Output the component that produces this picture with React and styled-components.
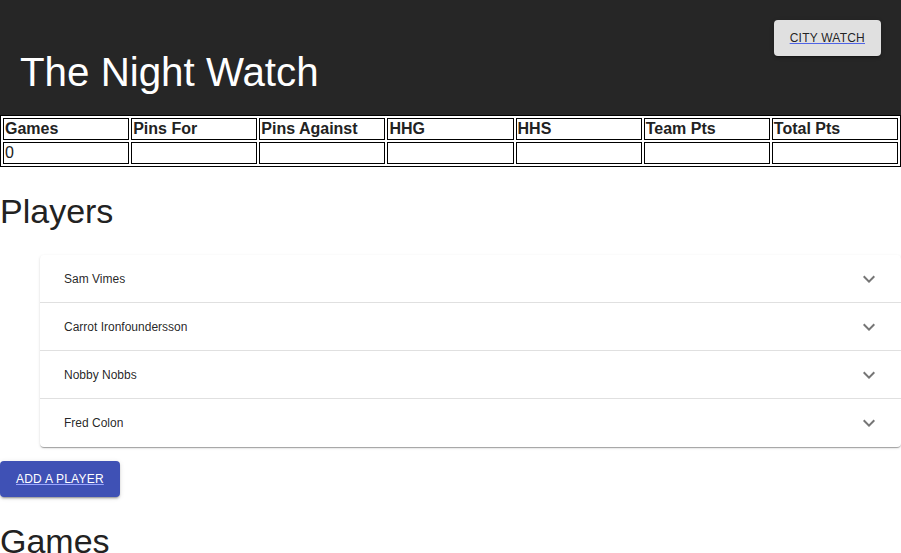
import React from "react";
import styled, { createGlobalStyle } from "styled-components";

const Global = createGlobalStyle`
  html, body { margin: 0; padding: 0; background: #fff; }
  body {
    font-family: "Liberation Sans", Arial, sans-serif;
    color: rgba(0,0,0,0.87);
    overflow: hidden;
  }
`;

const Header = styled.header`
  background: #262626;
  height: 115px;
  box-sizing: border-box;
  padding: 20px 20px 0 20px;
  display: flex;
  justify-content: space-between;
  align-items: flex-start;
`;

const Title = styled.h1`
  margin: 0;
  align-self: flex-end;
  margin-bottom: 19px;
  font-size: 40.3px;
  font-weight: 400;
  line-height: 46px;
  color: #fff;
`;

const LinkButton = styled.a`
  display: inline-flex;
  align-items: center;
  height: 36px;
  box-sizing: border-box;
  padding: 6px 16px;
  border-radius: 4px;
  font-size: 12px;
  letter-spacing: 0.22px;
  line-height: 24px;
  text-transform: uppercase;
  text-decoration: underline;
  text-decoration-color: ${(p) => (p.$primary ? "#9aa6ff" : "#4f63e6")};
  color: ${(p) => (p.$primary ? "#fff" : "rgba(0,0,0,0.87)")};
  background: ${(p) => (p.$primary ? "#3f51b5" : "#e0e0e0")};
  box-shadow: 0 3px 1px -2px rgba(0,0,0,0.2), 0 2px 2px 0 rgba(0,0,0,0.14),
    0 1px 5px 0 rgba(0,0,0,0.12);
  cursor: pointer;
`;

const Stats = styled.table`
  width: 100%;
  table-layout: fixed;
  border: 1px solid #000;
  border-spacing: 2px;
  font-size: 16px;
  color: #222;
`;

const HeadCell = styled.th`
  border: 1px solid #000;
  padding: 1px;
  text-align: left;
  font-weight: 700;
  line-height: 18px;
`;

const Cell = styled.td`
  border: 1px solid #000;
  padding: 1px;
  line-height: 18px;
`;

const Heading = styled.h2`
  margin: 23px 0 ${(p) => (p.$tight ? "0" : "23px")} 0;
  font-size: 34px;
  font-weight: 400;
  line-height: 42px;
  color: #222;
`;

const Accordion = styled.div`
  margin-left: 40px;
  background: #fff;
  border-radius: 4px;
  box-shadow: 0 2px 1px -1px rgba(0,0,0,0.2), 0 1px 1px 0 rgba(0,0,0,0.14),
    0 1px 3px 0 rgba(0,0,0,0.12);
`;

const Row = styled.div`
  position: relative;
  display: flex;
  align-items: center;
  justify-content: space-between;
  height: 48px;
  box-sizing: border-box;
  padding: 0 20px 0 24px;
  font-size: 12px;
  color: rgba(0,0,0,0.87);

  &::before {
    content: "";
    display: ${(p) => (p.$first ? "none" : "block")};
    position: absolute;
    left: 0;
    right: 0;
    top: -1px;
    height: 1px;
    background: rgba(0,0,0,0.12);
  }
`;

const Chevron = styled.svg`
  width: 24px;
  height: 24px;
  fill: rgba(0,0,0,0.54);
`;

const Actions = styled.div`
  margin-top: 14px;
`;

const columns = ["Games", "Pins For", "Pins Against", "HHG", "HHS", "Team Pts", "Total Pts"];
const values = ["0", "", "", "", "", "", ""];
const players = ["Sam Vimes", "Carrot Ironfoundersson", "Nobby Nobbs", "Fred Colon"];

export default function App() {
  return (
    <>
      <Global />
      <Header>
        <Title>The Night Watch</Title>
        <LinkButton>City Watch</LinkButton>
      </Header>
      <Stats>
        <thead>
          <tr>
            {columns.map((c) => (
              <HeadCell key={c}>{c}</HeadCell>
            ))}
          </tr>
        </thead>
        <tbody>
          <tr>
            {values.map((v, i) => (
              <Cell key={i}>{v}</Cell>
            ))}
          </tr>
        </tbody>
      </Stats>
      <Heading>Players</Heading>
      <Accordion>
        {players.map((p, i) => (
          <Row key={p} $first={i === 0}>
            <span>{p}</span>
            <Chevron viewBox="0 0 24 24">
              <path d="M16.59 8.59 12 13.17 7.41 8.59 6 10l6 6 6-6z" />
            </Chevron>
          </Row>
        ))}
      </Accordion>
      <Actions>
        <LinkButton $primary>Add a player</LinkButton>
      </Actions>
      <Heading $tight>Games</Heading>
    </>
  );
}
